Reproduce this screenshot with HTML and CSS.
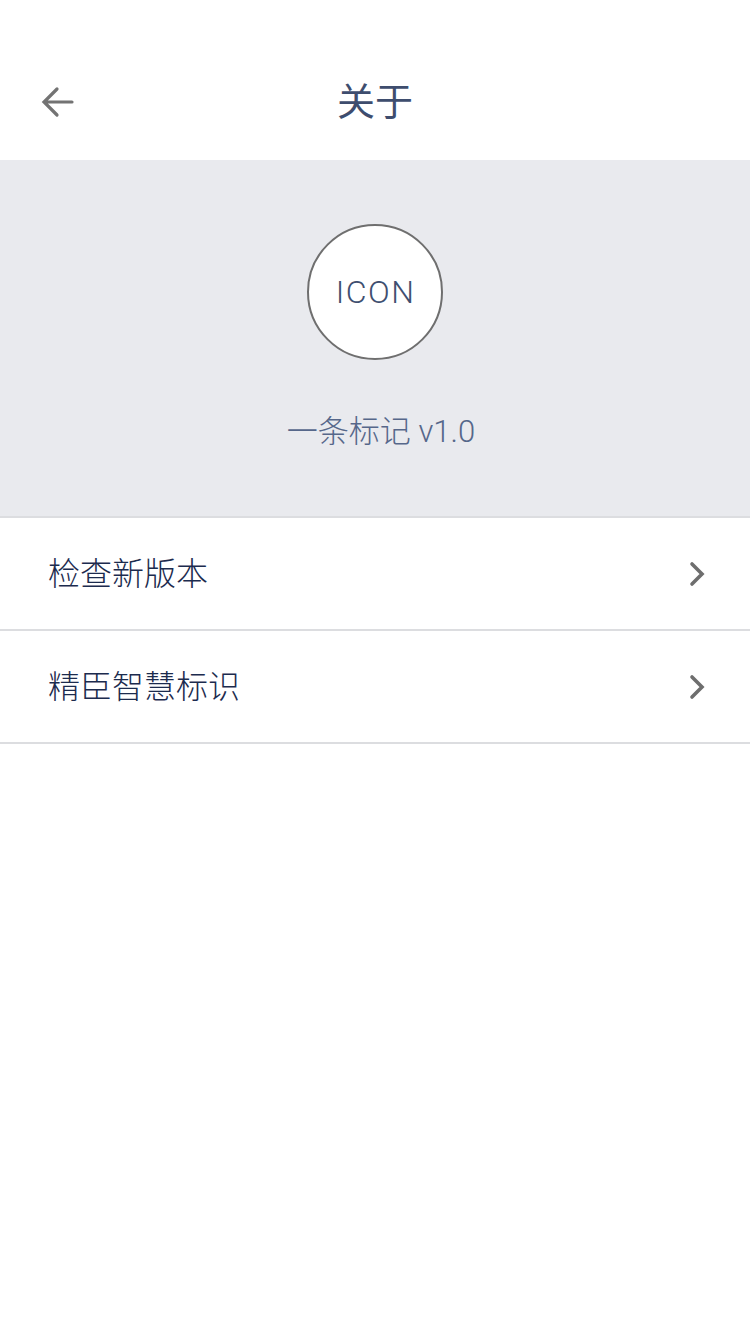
FILE: index.html
```html
<!DOCTYPE html>
<html lang="zh">
<head>
<meta charset="utf-8">
<link rel="stylesheet" href="styles.css">
</head>
<body>
<div class="page">
  <header class="header">
    <div class="back">
      <svg width="36" height="36" viewBox="0 0 36 36"><path d="M32 18H5M17 5L4 18L17 31" fill="none" stroke="#737373" stroke-width="3.2" stroke-linecap="round" stroke-linejoin="miter"/></svg>
    </div>
    <h1 class="title">关于</h1>
  </header>
  <section class="hero">
    <div class="logo">ICON</div>
    <div class="version">一条标记 v1.0</div>
  </section>
  <ul class="list">
    <li class="row"><span class="label">检查新版本</span>
      <svg class="chev" width="20" height="26" viewBox="0 0 20 26"><path d="M4 3L14 13L4 23" fill="none" stroke="#6e6e6e" stroke-width="3.6" stroke-linecap="round"/></svg>
    </li>
    <li class="row"><span class="label">精臣智慧标识</span>
      <svg class="chev" width="20" height="26" viewBox="0 0 20 26"><path d="M4 3L14 13L4 23" fill="none" stroke="#6e6e6e" stroke-width="3.6" stroke-linecap="round"/></svg>
    </li>
  </ul>
</div>
</body>
</html>
```
FILE: styles.css
```css
* { box-sizing: border-box; }
html, body { margin: 0; padding: 0; background: #fff; }
body { font-family: Roboto, "Noto Sans CJK SC", sans-serif; }
.page { width: 750px; min-height: 1334px; background: #fff; }
.header {
  height: 160px;
  display: flex;
  align-items: center;
  justify-content: center;
  position: relative;
  padding-top: 44px;
}
.back { position: absolute; left: 40px; top: 84px; width: 36px; height: 36px; }
.back svg { display: block; }
.title {
  margin: 0;
  font-size: 38px;
  font-weight: 400;
  color: #3e4d6e;
  line-height: 1;
  margin-top: 0;
}
.hero {
  height: 356px;
  background: #e9eaee;
  display: flex;
  flex-direction: column;
  align-items: center;
  padding-top: 64px;
}
.logo {
  width: 136px;
  height: 136px;
  border-radius: 50%;
  border: 2px solid #6f6f6f;
  background: #fff;
  display: flex;
  align-items: center;
  justify-content: center;
  font-size: 32px;
  font-weight: 300;
  letter-spacing: 1.5px;
  color: #3f4f70;
  padding-left: 1px;
}
.version {
  margin-top: 52px;
  padding-left: 12px;
  font-size: 31px;
  font-weight: 300;
  color: #56678a;
  line-height: 40px;
}
.list { list-style: none; margin: 0; padding: 0; border-top: 2px solid #dcdde0; }
.row {
  height: 113px;
  border-bottom: 2px solid #dcdde0;
  display: flex;
  align-items: center;
  justify-content: space-between;
  padding: 0 42px 0 48px;
}
.label { font-size: 32px; font-weight: 300; color: #1c2b4e; line-height: 1; }
.chev { display: block; }
```
